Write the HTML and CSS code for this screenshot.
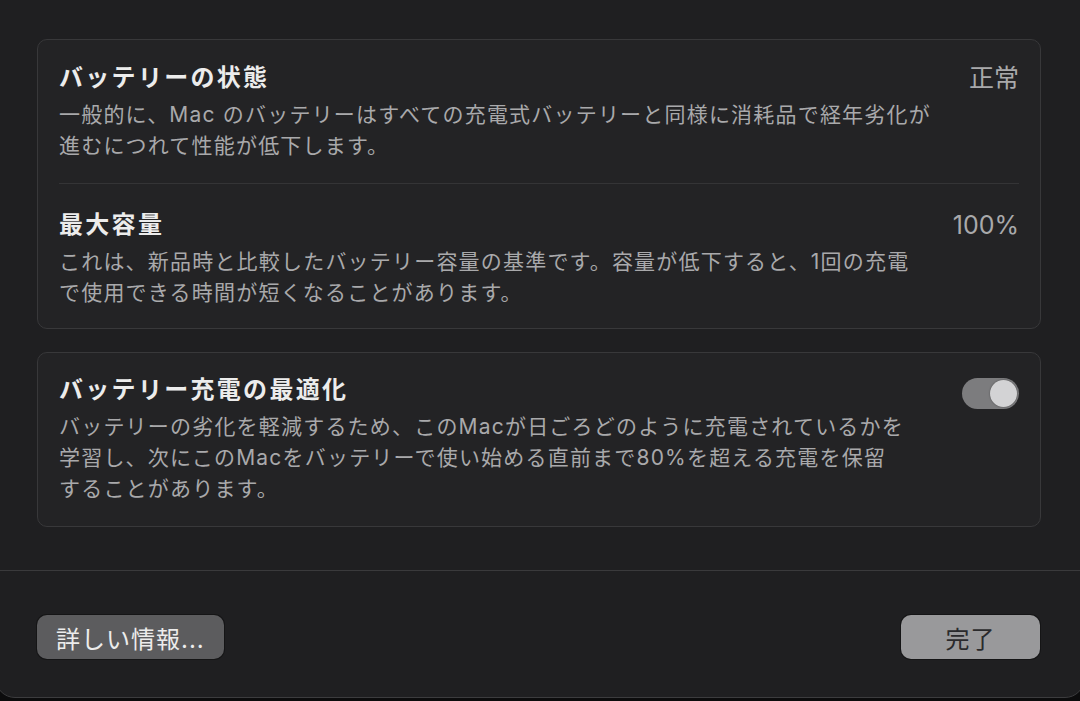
FILE: index.html
```html
<!DOCTYPE html>
<html lang="ja">

<head>
    <meta charset="UTF-8" />
    <meta name="viewport" content="width=device-width, initial-scale=1.0" />
    <title>バッテリー</title>
    <link rel="stylesheet" href="styles.css">
</head>

<body>
    <div class="sheet">
        <div class="content">
            <section class="card">
                <div class="row">
                    <div class="text">
                        <h2 class="title">バッテリーの状態</h2>
                        <p class="desc">一般的に、Mac のバッテリーはすべての充電式バッテリーと同様に消耗品で経年劣化が<br>進むにつれて性能が低下します。</p>
                    </div>
                    <span class="value">正常</span>
                </div>
                <div class="divider"></div>
                <div class="row">
                    <div class="text">
                        <h2 class="title">最大容量</h2>
                        <p class="desc">これは、新品時と比較したバッテリー容量の基準です。容量が低下すると、1回の充電<br>で使用できる時間が短くなることがあります。</p>
                    </div>
                    <span class="value">100%</span>
                </div>
            </section>

            <section class="card">
                <div class="row">
                    <div class="text">
                        <h2 class="title">バッテリー充電の最適化</h2>
                        <p class="desc">バッテリーの劣化を軽減するため、このMacが日ごろどのように充電されているかを<br>学習し、次にこのMacをバッテリーで使い始める直前まで80%を超える充電を保留<br>することがあります。</p>
                    </div>
                    <button class="toggle on" aria-label="バッテリー充電の最適化"><span class="knob"></span></button>
                </div>
            </section>
        </div>

        <footer class="footer">
            <button class="btn">詳しい情報...</button>
            <button class="btn primary">完了</button>
        </footer>
    </div>
</body>

</html>
```

FILE: styles.css
```css
* {
    margin: 0;
    padding: 0;
    box-sizing: border-box;
}

body {
    background-color: #0c0c0d;
    font-family: "Inter", "Noto Sans CJK JP", sans-serif;
    overflow: hidden;
}

.sheet {
    width: 1090px;
    height: 712px;
    margin-left: -5px;
    margin-top: -14px;
    padding-top: 14px;
    background-color: #1f1f21;
    border: 1px solid #3c3c3e;
    border-radius: 20px;
    display: flex;
    flex-direction: column;
}

.content {
    padding: 38px 43px 0 41px;
    display: flex;
    flex-direction: column;
    gap: 23px;
}

.card {
    background-color: #232325;
    border: 1px solid #38383a;
    border-radius: 10px;
    padding: 21px 21px 22px 21px;
}

.card:first-child {
    padding-top: 22px;
    padding-bottom: 20px;
}

.row {
    display: flex;
    justify-content: space-between;
    align-items: flex-start;
}

.title {
    font-size: 24px;
    font-weight: 700;
    line-height: 32px;
    color: #ececec;
    margin-bottom: 5px;
    letter-spacing: 2.3px;
}

.desc {
    font-size: 21px;
    line-height: 31px;
    color: #a9a9ab;
    letter-spacing: 1.2px;
    white-space: nowrap;
}

.value {
    font-size: 25px;
    line-height: 32px;
    color: #a9a9ab;
}

.divider {
    height: 1px;
    background-color: #343436;
    margin: 22px 0 25px 0;
}

.toggle {
    width: 57px;
    height: 31px;
    margin-top: 4px;
    border: none;
    border-radius: 16px;
    background-color: #7c7c7e;
    display: flex;
    align-items: center;
    padding: 2px;
}

.toggle.on {
    justify-content: flex-end;
}

.knob {
    width: 27px;
    height: 27px;
    border-radius: 50%;
    background-color: #d3d3d5;
    box-shadow: 0 0 2px rgba(0, 0, 0, 0.4);
}

.footer {
    margin-top: 43px;
    border-top: 1px solid #3a3a3c;
    padding: 44px 44px 0 41px;
    display: flex;
    justify-content: space-between;
}

.btn {
    height: 44px;
    padding: 0 19px;
    border: none;
    border-radius: 10px;
    background-color: #5c5c5e;
    color: #ececec;
    font-family: "Inter", "Noto Sans CJK JP", sans-serif;
    font-size: 24px;
    letter-spacing: 1px;
    box-shadow: 0 0 0 1px #151516;
}

.btn.primary {
    width: 139px;
    background-color: #99999b;
    color: #2a2a2c;
}
```
